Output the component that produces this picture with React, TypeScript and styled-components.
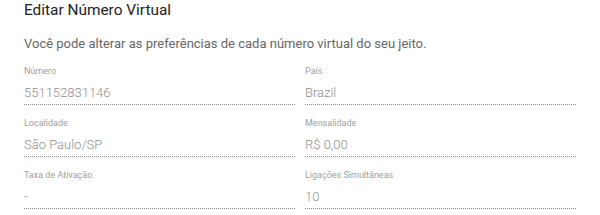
import React from "react";
import styled, { createGlobalStyle } from "styled-components";

const Global = createGlobalStyle`
  html, body { margin: 0; padding: 0; background: #fff; }
  body { font-family: Roboto, "Noto Sans", sans-serif; -webkit-font-smoothing: antialiased; }
`;

const Panel = styled.section`
  width: 552px;
  padding: 0 24px;
`;

const Title = styled.h2`
  margin: 0;
  padding-top: 1px;
  font-size: 15.4px;
  font-weight: 400;
  line-height: 18px;
  color: #222;
`;

const Subtitle = styled.p`
  margin: 17px 0 0;
  font-size: 13px;
  line-height: 16px;
  color: #666;
`;

const Grid = styled.div`
  display: grid;
  grid-template-columns: 271px 271px;
  column-gap: 10px;
  margin-top: 13px;
`;

const Field = styled.div`
  display: flex;
  flex-direction: column;
  height: 52px;
`;

const Label = styled.span`
  font-size: 9px;
  line-height: 12px;
  color: #a0a0a0;
`;

const Value = styled.span`
  margin-top: 7px;
  font-size: 13px;
  font-weight: 300;
  line-height: 17px;
  color: #8f8f8f;
  padding-bottom: 3px;
  border-bottom: 1px dotted #8a8a8a;
`;

const fields: [string, string][] = [
  ["Número", "551152831146"],
  ["País", "Brazil"],
  ["Localidade", "São Paulo/SP"],
  ["Mensalidade", "R$ 0,00"],
  ["Taxa de Ativação", "-"],
  ["Ligações Simultâneas", "10"],
];

export default function App() {
  return (
    <>
      <Global />
      <Panel>
        <Title>Editar Número Virtual</Title>
        <Subtitle>Você pode alterar as preferências de cada número virtual do seu jeito.</Subtitle>
        <Grid>
          {fields.map(([l, v]) => (
            <Field key={l}>
              <Label>{l}</Label>
              <Value>{v}</Value>
            </Field>
          ))}
        </Grid>
      </Panel>
    </>
  );
}
